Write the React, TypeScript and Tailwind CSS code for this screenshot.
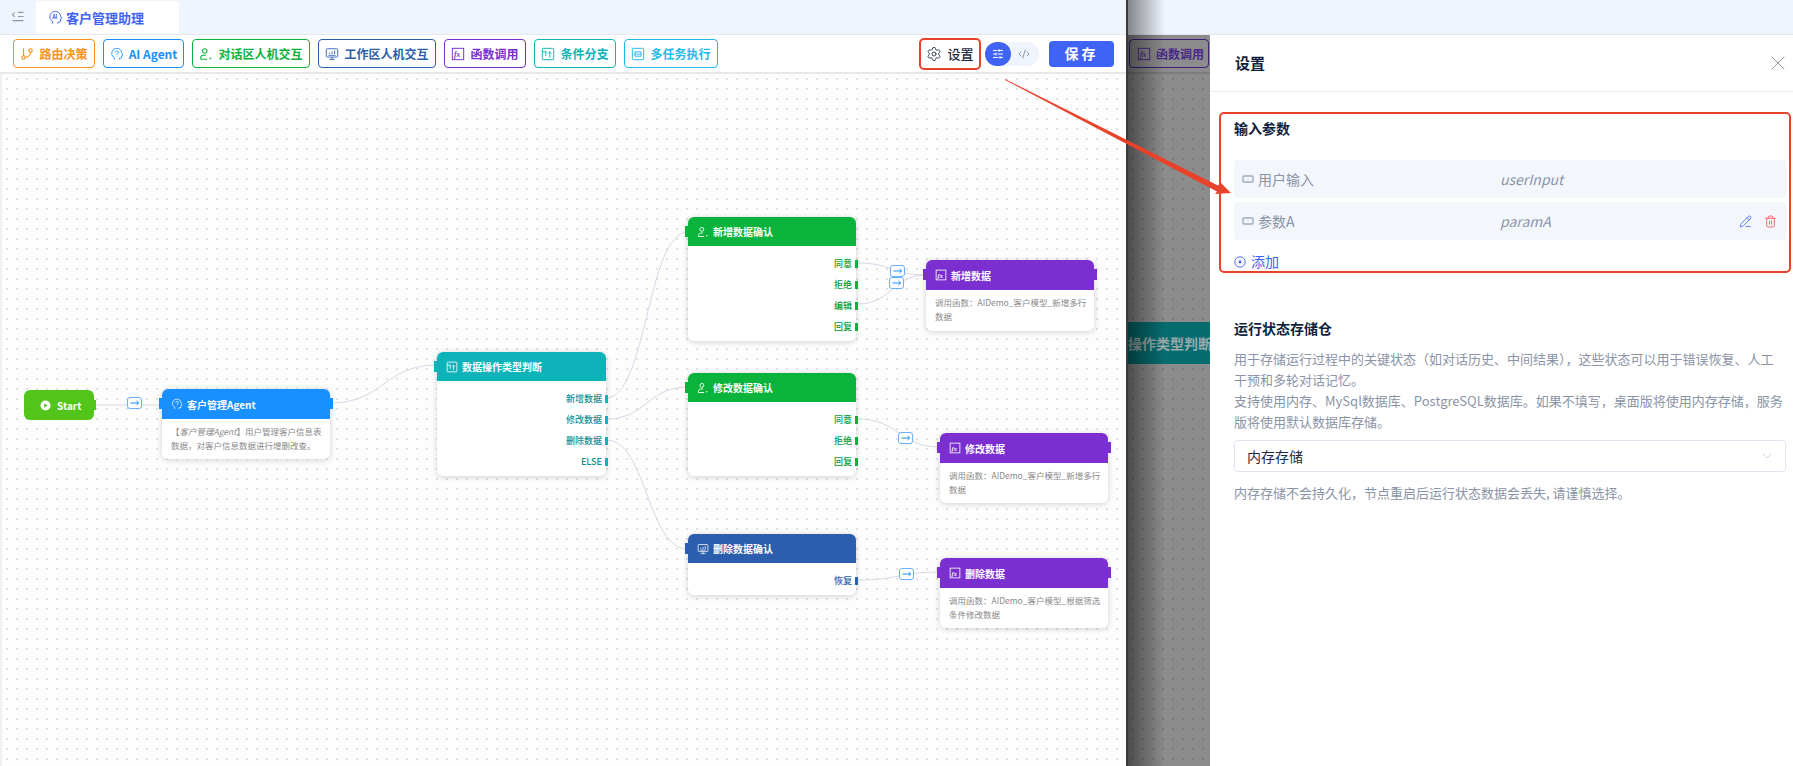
import React from "react";
import { ChevronDown, CodeXml, GitBranch, PencilLine, Settings, SlidersHorizontal, Trash2, X } from "lucide-react";

type IconProps = { className?: string };

const HeadIcon = ({ className }: IconProps) => (
  <svg viewBox="0 0 16 16" fill="none" stroke="currentColor" strokeWidth="1" className={className}>
    <path d="M5 14.5v-2.3C3.2 11.2 2 9.6 2 7.4 2 4 4.6 1.5 7.8 1.5c3 0 5.4 2.1 5.6 5 .1.7 1 1.9 1.3 2.6l-1.3.6v2c0 .8-.5 1.3-1.3 1.3H10.5v1.5" />
    <path d="M6.2 6.2a1.7 1.7 0 1 1 2.4 1.6c-.5.3-.7.6-.7 1.2M7.9 10.6v.4" />
  </svg>
);
const AiHeadIcon = ({ className }: IconProps) => (
  <svg viewBox="0 0 16 16" fill="none" stroke="currentColor" strokeWidth="1" className={className}>
    <path d="M5 14.5v-2.3C3.2 11.2 2 9.6 2 7.4 2 4 4.6 1.5 7.8 1.5c3 0 5.4 2.1 5.6 5 .1.7 1 1.9 1.3 2.6l-1.3.6v2c0 .8-.5 1.3-1.3 1.3H10.5v1.5" />
    <text x="4.4" y="9.8" fontSize="5.8" fontWeight="700" fill="currentColor" stroke="none">AI</text>
  </svg>
);
const UserIcon = ({ className }: IconProps) => (
  <svg viewBox="0 0 16 16" fill="none" stroke="currentColor" strokeWidth="1.2" className={className}>
    <circle cx="6.5" cy="4.5" r="2.6" />
    <path d="M2 14v-1.6c0-1.8 1.3-3 3-3h3M2 14h7.5" />
    <circle cx="13" cy="13" r="1" fill="currentColor" stroke="none" />
  </svg>
);
const MonitorIcon = ({ className }: IconProps) => (
  <svg viewBox="0 0 16 16" fill="none" stroke="currentColor" strokeWidth="1" className={className}>
    <rect x="1.5" y="2" width="13" height="9.5" rx="1" />
    <path d="M8 11.5V14M5 14.2h6M4 9.5h8" />
    <path d="M5 8V6.5M8 8V5M11 8V4" />
  </svg>
);
const ConditionIcon = ({ className }: IconProps) => (
  <svg viewBox="0 0 16 16" fill="none" stroke="currentColor" strokeWidth="1.1" className={className}>
    <rect x="1.5" y="1.5" width="13" height="13" rx="1" />
    <path d="M1.5 5.5h5M5.5 5.5v5M10 12V5.5M8 7.5l2-2 2 2" />
  </svg>
);
const TaskIcon = ({ className }: IconProps) => (
  <svg viewBox="0 0 16 16" fill="none" stroke="currentColor" strokeWidth="1.1" className={className}>
    <rect x="1.5" y="1.5" width="13" height="13" rx="1" />
    <path d="M4.5 5.5h7v5h-7zM4.5 8h7" />
  </svg>
);
const FxIcon = ({ className }: IconProps) => (
  <svg viewBox="0 0 16 16" fill="none" stroke="currentColor" strokeWidth="1.1" className={className}>
    <rect x="1.5" y="1.5" width="13" height="13" />
    <text x="3.4" y="11.4" fontSize="8.5" fontStyle="italic" fontFamily="'Liberation Serif',serif" fill="currentColor" stroke="none">fx</text>
  </svg>
);
const SidebarIcon = ({ className }: IconProps) => (
  <svg viewBox="0 0 14 12" fill="none" stroke="currentColor" strokeWidth="1.2" className={className}>
    <path d="M3.5 1.5 1 4l2.5 2.5M7 1.5h6M7 6h6M1 10.5h12" />
  </svg>
);
const ParamIcon = ({ className }: IconProps) => (
  <svg viewBox="0 0 12 8" fill="none" stroke="currentColor" strokeWidth="1.4" className={className}>
    <rect x="1" y="1" width="10" height="6" rx="1" />
  </svg>
);
const AddIcon = ({ className }: IconProps) => (
  <svg viewBox="0 0 12 12" fill="none" stroke="currentColor" strokeWidth="0.9" className={className}>
    <circle cx="6" cy="6" r="5.2" />
    <circle cx="6" cy="6" r="1.4" fill="currentColor" stroke="none" />
  </svg>
);
const PlayIcon = ({ className }: IconProps) => (
  <svg viewBox="0 0 12 12" className={className}>
    <circle cx="6" cy="6" r="5.5" fill="#ffffff" />
    <path d="M4.6 3.6 8.2 6 4.6 8.4z" fill="#52c41a" />
  </svg>
);

const toolItems = [
  { label: "路由决策", cls: "w-[82px] border-[#f7931e] text-[#f7931e]", Icon: GitBranch },
  { label: "AI Agent", cls: "w-[81px] border-[#1890ff] text-[#1890ff]", Icon: HeadIcon },
  { label: "对话区人机交互", cls: "w-[118px] border-[#0ab33b] text-[#0ab33b]", Icon: UserIcon },
  { label: "工作区人机交互", cls: "w-[118px] border-[#2b5ead] text-[#2b5ead]", Icon: MonitorIcon },
  { label: "函数调用", cls: "w-[82px] border-[#7b2fd0] text-[#7b2fd0]", Icon: FxIcon },
  { label: "条件分支", cls: "w-[82px] border-[#0db3b8] text-[#0db3b8]", Icon: ConditionIcon },
  { label: "多任务执行", cls: "w-[94px] border-[#1fb8ea] text-[#1fb8ea]", Icon: TaskIcon },
];

function Toolbar() {
  return (
    <div className="flex h-[37px] shrink-0 items-center bg-white pl-[13px] pr-[12px]">
      <div className="flex gap-2">
        {toolItems.map(({ label, cls, Icon }) => (
          <div key={label} className={`flex h-[29px] items-center justify-center gap-[5px] rounded-[4px] border bg-white text-[12px] font-bold whitespace-nowrap ${cls}`}>
            <Icon className="h-[14px] w-[14px] shrink-0" />
            <span>{label}</span>
          </div>
        ))}
      </div>
      <div className="ml-auto flex h-[32px] w-[62px] items-center justify-center gap-[5px] rounded-[5px] border-2 border-[#e8432a] text-[13px] font-medium text-[#1f2a44]">
        <Settings className="h-[16px] w-[16px]" strokeWidth={1.3} />
        <span>设置</span>
      </div>
      <div className="ml-[4px] flex h-[24px] w-[54px] items-center rounded-full bg-[#f0f4fd]">
        <div className="flex h-[24px] w-[26px] items-center justify-center rounded-full bg-[#3f63f5]">
          <SlidersHorizontal className="h-[12px] w-[12px] text-white" />
        </div>
        <CodeXml className="ml-[7px] h-[12px] w-[12px] text-[#8c96a8]" />
      </div>
      <div className="ml-[10px] flex h-[26px] w-[65px] items-center justify-center rounded-[4px] bg-[#3f63f5] text-[14px] font-bold tracking-[3px] text-white">
        保存
      </div>
    </div>
  );
}

const Handle = ({ cls }: { cls: string }) => <span className={`-mr-[2px] ml-[3px] h-[8px] w-[3px] shrink-0 ${cls}`} />;

function Rows({ rows, text, handle }: { rows: string[]; text: string; handle: string }) {
  return (
    <div className="flex flex-col pt-[7px]">
      {rows.map((r) => (
        <div key={r} className={`flex h-[21px] items-center justify-end text-[9px] font-medium ${text}`}>
          <span>{r}</span>
          <Handle cls={handle} />
        </div>
      ))}
    </div>
  );
}

function NodeCard({ pos, head, title, icon, handleCls, rightHandle, children }: {
  pos: string; head: string; title: string; icon: React.ReactNode; handleCls: string; rightHandle?: boolean; children: React.ReactNode;
}) {
  return (
    <div className={`absolute rounded-[6px] bg-white shadow-[0_1px_6px_rgba(0,0,0,0.18)] ${pos}`}>
      <span className={`absolute -left-[3px] top-[9px] h-[11px] w-[3px] ${handleCls}`} />
      {rightHandle && <span className={`absolute -right-[3px] top-[9px] h-[11px] w-[3px] ${handleCls}`} />}
      <div className={`flex items-center gap-[4px] rounded-t-[6px] pl-[9px] text-[10px] font-bold text-white ${head}`}>
        {icon}
        <span className="whitespace-nowrap">{title}</span>
      </div>
      {children}
    </div>
  );
}

const EdgeLabel = ({ pos }: { pos: string }) => (
  <div className={`absolute flex h-[12px] w-[15px] items-center justify-center rounded-[3px] border border-[#69b1ff] bg-white ${pos}`}>
    <svg viewBox="0 0 10 6" className="h-[6px] w-[10px]" fill="none" stroke="#1890ff" strokeWidth="1">
      <path d="M0.5 3h8M6.5 1l2.2 2-2.2 2" />
    </svg>
  </div>
);

const Desc = ({ children }: { children: React.ReactNode }) => (
  <div className="px-[9px] pt-[5px] text-[8.5px] leading-[14px] whitespace-nowrap text-[#8a8a8a]">{children}</div>
);

function Canvas() {
  const ic = "h-[12px] w-[12px] shrink-0";
  const g = "bg-[#0ab33b]";
  return (
    <div className="relative min-h-0 flex-1 overflow-hidden border-l-2 border-l-[#f0f0f0] bg-[#fdfdfd] bg-[radial-gradient(#e0e0e0_1px,transparent_1px)] bg-[size:10px_10px]">
      <svg className="absolute -left-[2px] top-0 h-[692px] w-[1126px]" fill="none" stroke="#d5d9e6" strokeWidth="1">
        <path d="M94 331H162" />
        <path d="M330 329C384 329 384 291 437 291" />
        <path d="M606 324C647 324 647 158 688 158" />
        <path d="M606 345C647 345 647 313 688 313" />
        <path d="M606 366C647 366 647 475 688 475" />
        <path d="M858 189C892 189 892 201 926 201" />
        <path d="M858 230C892 230 892 201 926 201" />
        <path d="M858 345C899 345 899 373 940 373" />
        <path d="M858 506C899 506 899 498 940 498" />
      </svg>

      <div className="absolute left-[22px] top-[316px] flex h-[30px] w-[70px] items-center gap-[6px] rounded-[6px] bg-[#52c41a] pl-[16px] text-[10px] font-bold text-white">
        <PlayIcon className="h-[11px] w-[11px]" />
        <span>Start</span>
        <span className="absolute -right-[2px] top-[10px] h-[10px] w-[2px] bg-[#52c41a]" />
      </div>
      <EdgeLabel pos="left-[125px] top-[323px]" />

      <NodeCard pos="left-[160px] top-[315px] h-[70px] w-[168px]" head="h-[30px] bg-[#1890ff]" title="客户管理Agent" handleCls="bg-[#1890ff]" rightHandle icon={<HeadIcon className={ic} />}>
        <Desc>
          【<i>客户管理Agent</i>】用户管理客户信息表
          <br />
          数据，对客户信息数据进行增删改查。
        </Desc>
      </NodeCard>

      <NodeCard pos="left-[435px] top-[278px] h-[124px] w-[169px]" head="h-[29px] bg-[#0db3b8]" title="数据操作类型判断" handleCls="bg-[#0db3b8]" icon={<ConditionIcon className={ic} />}>
        <Rows rows={["新增数据", "修改数据", "删除数据", "ELSE"]} text="text-[#0a8f94]" handle="bg-[#0db3b8]" />
      </NodeCard>

      <NodeCard pos="left-[686px] top-[143px] h-[124px] w-[168px]" head="h-[29px] bg-[#0ab33b]" title="新增数据确认" handleCls={g} icon={<UserIcon className={ic} />}>
        <Rows rows={["同意", "拒绝", "编辑", "回复"]} text="text-[#0a9a35]" handle={g} />
      </NodeCard>
      <NodeCard pos="left-[686px] top-[299px] h-[103px] w-[168px]" head="h-[29px] bg-[#0ab33b]" title="修改数据确认" handleCls={g} icon={<UserIcon className={ic} />}>
        <Rows rows={["同意", "拒绝", "回复"]} text="text-[#0a9a35]" handle={g} />
      </NodeCard>
      <NodeCard pos="left-[686px] top-[460px] h-[61px] w-[168px]" head="h-[29px] bg-[#2b5ead]" title="删除数据确认" handleCls="bg-[#2b5ead]" icon={<MonitorIcon className={ic} />}>
        <Rows rows={["恢复"]} text="text-[#2b5ead]" handle="bg-[#2b5ead]" />
      </NodeCard>

      <EdgeLabel pos="left-[888px] top-[191px]" />
      <EdgeLabel pos="left-[887px] top-[203px]" />
      <NodeCard pos="left-[924px] top-[186px] h-[71px] w-[168px]" head="h-[30px] bg-[#7b2fd0]" title="新增数据" handleCls="bg-[#7b2fd0]" rightHandle icon={<FxIcon className={ic} />}>
        <Desc>
          调用函数：AIDemo_客户模型_新增多行
          <br />
          数据
        </Desc>
      </NodeCard>
      <EdgeLabel pos="left-[896px] top-[358px]" />
      <NodeCard pos="left-[938px] top-[359px] h-[70px] w-[168px]" head="h-[30px] bg-[#7b2fd0]" title="修改数据" handleCls="bg-[#7b2fd0]" rightHandle icon={<FxIcon className={ic} />}>
        <Desc>
          调用函数：AIDemo_客户模型_新增多行
          <br />
          数据
        </Desc>
      </NodeCard>
      <EdgeLabel pos="left-[897px] top-[494px]" />
      <NodeCard pos="left-[938px] top-[484px] h-[70px] w-[168px]" head="h-[30px] bg-[#7b2fd0]" title="删除数据" handleCls="bg-[#7b2fd0]" rightHandle icon={<FxIcon className={ic} />}>
        <Desc>
          调用函数：AIDemo_客户模型_根据筛选
          <br />
          条件修改数据
        </Desc>
      </NodeCard>
    </div>
  );
}

function DimArea() {
  return (
    <div className="flex w-[82px] shrink-0 flex-col overflow-hidden bg-[#8c8c8c]">
      <div className="flex h-[37px] shrink-0 items-center pl-[1px]">
        <div className="flex h-[29px] w-[80px] items-center gap-[5px] rounded-[4px] border border-[#3f1f7a] px-[7px] text-[12px] font-bold whitespace-nowrap text-[#48298a]">
          <FxIcon className="h-[14px] w-[14px] shrink-0" />
          <span>函数调用</span>
        </div>
      </div>
      <div className="h-[2px] shrink-0 bg-[#7c7c7c]" />
      <div className="min-h-0 flex-1 bg-[radial-gradient(#7a7a7a_1px,transparent_1px)] bg-[size:10px_10px] pt-[248px]">
        <div className="flex h-[42px] items-center overflow-hidden bg-[#066c6e]">
          <span className="-ml-[14px] text-[14px] font-bold whitespace-nowrap text-[#98aaaa]">据操作类型判断</span>
        </div>
      </div>
    </div>
  );
}

function ParamRow({ label, name, actions }: { label: string; name: string; actions?: boolean }) {
  return (
    <div className="flex h-[38px] items-center rounded-[4px] bg-[#f3f6fb] text-[14px] text-[#8a94a6]">
      <div className="flex w-[266px] items-center gap-[4px] pl-[8px]">
        <ParamIcon className="h-[8px] w-[12px] text-[#a3adbd]" />
        <span>{label}</span>
      </div>
      <span className="italic">{name}</span>
      {actions && (
        <div className="ml-auto flex items-center gap-[12px] pr-[9px]">
          <PencilLine className="h-[13px] w-[13px] text-[#3f63f5]" strokeWidth={1.5} />
          <Trash2 className="h-[13px] w-[13px] text-[#ef5350]" strokeWidth={1.5} />
        </div>
      )}
    </div>
  );
}

function Panel() {
  return (
    <div className="min-w-0 flex-1 bg-white">
      <div className="flex h-[57px] items-center justify-between border-b border-[#eeeeee] pl-[25px] pr-[3px]">
        <span className="text-[15px] font-bold text-[#0f1f3d]">设置</span>
        <X className="h-[24px] w-[24px] text-[#8c8c8c]" strokeWidth={0.9} />
      </div>
      <div className="ml-[9px] mr-[2px] mt-[20px] rounded-[5px] border-2 border-[#e8432a] pl-[13px] pr-[3px] pt-[4px]">
        <div className="text-[14px] leading-[20px] font-bold text-[#0f1f3d]">输入参数</div>
        <div className="mt-[22px] flex flex-col gap-[4px]">
          <ParamRow label="用户输入" name="userInput" />
          <ParamRow label="参数A" name="paramA" actions />
        </div>
        <div className="mt-[12px] flex h-[19px] items-center gap-[5px] text-[14px] text-[#3f63f5]">
          <AddIcon className="h-[12px] w-[12px]" />
          <span>添加</span>
        </div>
      </div>
      <div className="mt-[45px] pl-[24px] pr-[7px]">
        <div className="text-[14px] leading-[20px] font-bold text-[#0f1f3d]">运行状态存储仓</div>
        <p className="mt-[10px] text-[13px] leading-[21px] text-[#8a94a6]">
          用于存储运行过程中的关键状态（如对话历史、中间结果），这些状态可以用于错误恢复、人工干预和多轮对话记忆。
          <br />
          支持使用内存、MySql数据库、PostgreSQL数据库。如果不填写，桌面版将使用内存存储，服务版将使用默认数据库存储。
        </p>
        <div className="mt-[8px] flex h-[32px] items-center justify-between rounded-[4px] border border-[#dfe4ee] pl-[12px] pr-[10px] text-[14px] text-[#1f2a44]">
          <span>内存存储</span>
          <ChevronDown className="h-[16px] w-[16px] text-[#c4cad6]" strokeWidth={1.2} />
        </div>
        <p className="mt-[10px] text-[13px] leading-[21px] text-[#8a94a6]">内存存储不会持久化，节点重启后运行状态数据会丢失, 请谨慎选择。</p>
      </div>
    </div>
  );
}

export default function App() {
  return (
    <div className="relative flex h-[766px] w-[1793px] overflow-hidden bg-white font-['Noto_Sans_CJK_SC','Noto_Sans',sans-serif]">
      <div className="flex w-[1126px] shrink-0 flex-col">
        <div className="flex h-[35px] shrink-0 items-end border-b border-[#e4e8f5] bg-[#f0f4fd]">
          <SidebarIcon className="mb-[12px] ml-[11px] h-[11px] w-[14px] text-[#8c96a8]" />
          <div className="ml-[11px] flex h-[33px] w-[143px] items-center gap-[3px] rounded-t-[4px] bg-white pl-[12px] text-[13px] font-bold text-[#3f63f5]">
            <AiHeadIcon className="h-[15px] w-[15px]" />
            <span>客户管理助理</span>
          </div>
        </div>
        <Toolbar />
        <div className="h-[2px] shrink-0 bg-[#e8e8e8]" />
        <Canvas />
      </div>
      <div className="w-[2px] shrink-0 bg-[#3a3a3a]" />
      <div className="relative flex min-w-0 flex-1 flex-col">
        <div className="h-[35px] shrink-0 border-b border-[#e4e8f5] bg-[#f0f4fd]" />
        <div className="flex min-h-0 flex-1">
          <DimArea />
          <Panel />
        </div>
        <div className="pointer-events-none absolute inset-y-0 left-0 w-[37px] bg-linear-to-r from-[rgba(0,0,0,0.45)] to-transparent" />
      </div>
      <svg className="pointer-events-none absolute left-0 top-0 h-[766px] w-[1793px]" fill="#e8432a">
        <polygon points="1005,79 1218,185.5 1221,183 1231,193 1215,194 1217,191.5 1005,80" />
      </svg>
    </div>
  );
}
